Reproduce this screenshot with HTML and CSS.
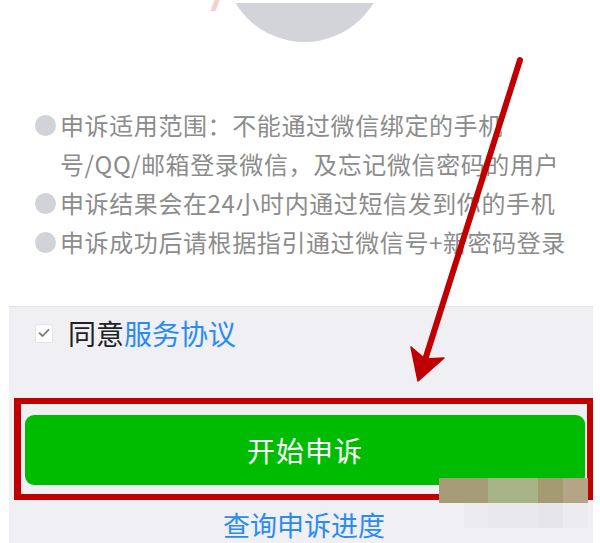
FILE: index.html
```html
<!DOCTYPE html>
<html lang="zh-CN">
<head>
  <meta charset="UTF-8"/>
  <meta name="viewport" content="width=device-width, initial-scale=1.0"/>
  <title>微信申诉</title>
  <link rel="stylesheet" href="styles.css">
</head>
<body>
<div class="page">
  <section class="intro">
    <div class="avatar"></div>

    <div class="notes">
      <div class="note">
        <span class="dot"></span>
        <p>申诉适用范围：不能通过微信绑定的手机<br>号/QQ/邮箱登录微信，及忘记微信密码的用户</p>
      </div>
      <div class="note">
        <span class="dot"></span>
        <p>申诉结果会在24小时内通过短信发到你的手机</p>
      </div>
      <div class="note">
        <span class="dot"></span>
        <p>申诉成功后请根据指引通过微信号+新密码登录</p>
      </div>
    </div>
  </section>

  <section class="actions">
    <label class="agree-row">
      <span class="check-box">
        <svg width="12" height="10" viewBox="0 0 12 10"><path d="M1.5 5.2 L4.6 8 L10.5 1.8" fill="none" stroke="#7a7a7a" stroke-width="1.8" stroke-linecap="round" stroke-linejoin="round"/></svg>
      </span>
      <span class="agree-text">同意<a class="link">服务协议</a></span>
    </label>

    <!-- red frame drawn around the button in the screenshot -->
    <div class="mark-frame">
      <button class="start-btn">开始申诉</button>
    </div>

    <a class="query-link">查询申诉进度</a>
  </section>
</div>

<!-- pixelated patch over the button corner -->
<div class="mosaic">
  <span style="width:49px;background:#a69d78"></span>
  <span style="width:50px;background:#a9b388"></span>
  <span style="width:25px;background:#a49b72"></span>
  <span style="width:25px;background:#b5a486"></span>
</div>
<div class="mosaic-light">
  <span style="width:24px;background:#ececf0"></span>
  <span style="width:50px;background:#e9e9ed"></span>
  <span style="width:25px;background:#e6e6ea"></span>
  <span style="width:25px;background:#ececf0"></span>
</div>

<span class="smudge"></span>

<!-- annotation arrow -->
<svg class="arrow" width="600" height="543" viewBox="0 0 600 543">
  <line x1="520" y1="60" x2="425" y2="360" stroke="#c00000" stroke-width="6" stroke-linecap="round"/>
  <polygon points="418,381 411,347 425,359 444,358" fill="#c00000" stroke="#c00000" stroke-width="1.5" stroke-linejoin="round"/>
</svg>
</body>
</html>
```

FILE: styles.css
```css
body {
  margin: 0;
  background-color: #fff;
  font-family: "Noto Sans CJK SC", "Noto Sans", sans-serif;
  overflow: hidden;
}
.page {
  width: 600px;
  height: 543px;
  overflow: hidden;
}
.intro {
  height: 306px;
  overflow: hidden; /* keeps the avatar's negative margin inside */
  border-top: 3px solid #fff;
  box-sizing: border-box;
}
.avatar {
  width: 161px;
  height: 161px;
  margin: -122px 0 0 224px;
  border-radius: 50%;
  background-color: #d3d4da;
}
.notes {
  margin-top: 63px;
  padding-left: 35px;
}
.note {
  display: flex;
  align-items: flex-start;
}
.note p {
  margin: 0;
  font-size: 24px;
  line-height: 39px;
  letter-spacing: 0.6px;
  color: #8c8c8c;
  white-space: nowrap;
}
.dot {
  flex: none;
  width: 21px;
  height: 21px;
  margin: 10px 4px 0 0;
  border-radius: 50%;
  background-color: #d2d3d8;
}

.actions {
  height: 237px;
  margin: 0 7px 0 9px;
  background-color: #efeff4;
  border-top: 1px solid #e2e2e7;
  box-sizing: border-box;
}
.agree-row {
  display: flex;
  align-items: center;
  height: 40px;
  padding: 6px 0 0 26px;
}
.check-box {
  display: flex;
  align-items: center;
  justify-content: center;
  width: 18px;
  height: 19px;
  margin-right: 15px;
  background-color: #fff;
  border: 1px solid #e4e4e8;
  border-radius: 2px;
  box-sizing: border-box;
}
.agree-text {
  font-size: 28px;
  line-height: 40px;
  color: #222;
}
.link {
  color: #2a8cf2;
}
.mark-frame {
  height: 102px;
  margin: 45px 0 0 5px;
  padding: 11px 2px 9px 4px;
  border: 6px solid #c00000;
  border-left-width: 7px;
  box-sizing: border-box;
}
.start-btn {
  display: block;
  width: 100%;
  height: 100%;
  border: none;
  border-radius: 9px;
  background-color: #00bc00;
  color: #fff;
  font-family: inherit;
  font-size: 28px;
  letter-spacing: 1px;
  padding: 0;
}
.query-link {
  display: block;
  margin-top: 5px;
  padding-left: 6px;
  text-align: center;
  font-size: 27px;
  line-height: 40px;
  color: #2a8cf2;
}

.mosaic,
.mosaic-light {
  position: absolute;
  display: flex;
}
.mosaic {
  left: 439px;
  top: 478px;
  height: 25px;
}
.mosaic-light {
  left: 464px;
  top: 503px;
  height: 25px;
}
.mosaic span,
.mosaic-light span {
  display: block;
  height: 100%;
}
.smudge {
  position: absolute;
  left: 213px;
  top: -2px;
  width: 5px;
  height: 13px;
  background-color: #f6cdd1;
  transform: skewX(-20deg);
}
.arrow {
  position: absolute;
  left: 0;
  top: 0;
  pointer-events: none;
}
```
